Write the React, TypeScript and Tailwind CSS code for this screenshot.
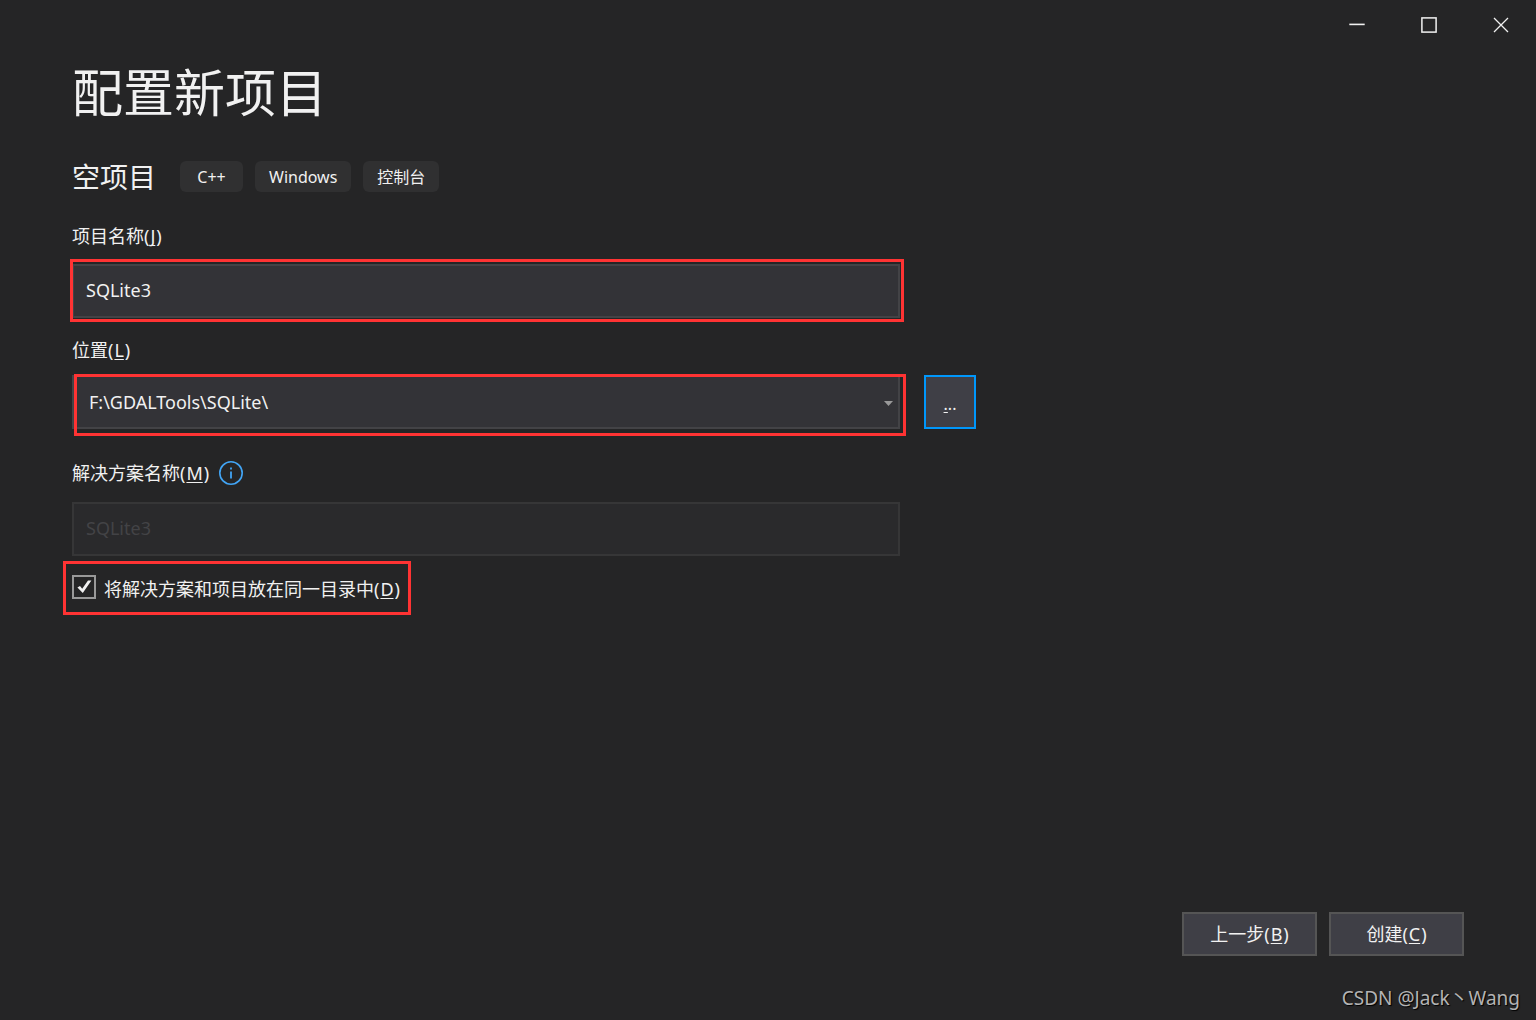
import { useState } from "react";
import type { ReactNode } from "react";

const tags = ["C++", "Windows", "控制台"];

function AccessKey({ children }: { children: ReactNode }) {
  return (
    <span>
      (
      <span className="mx-px underline decoration-1 underline-offset-2 [text-decoration-skip-ink:none]">
        {children}
      </span>
      )
    </span>
  );
}

// red frame that lies over a field
function Highlight({ className }: { className: string }) {
  return (
    <div
      aria-hidden="true"
      className={`pointer-events-none absolute border-3 border-[#ff3333] ${className}`}
    />
  );
}

function WindowControls() {
  return (
    <div className="flex h-[50px] justify-end text-[#f1f1f1]">
      <button type="button" aria-label="最小化" className="flex w-[72px] items-center justify-center">
        <svg width="18" height="16" viewBox="0 0 18 16">
          <rect x="2.3" y="6.6" width="15.4" height="1.6" fill="currentColor" />
        </svg>
      </button>
      <button type="button" aria-label="最大化" className="flex w-[72px] items-center justify-center">
        <svg width="18" height="16" viewBox="0 0 18 16" fill="none">
          <rect x="2.9" y="0.9" width="14.2" height="14.2" stroke="currentColor" strokeWidth="1.5" />
        </svg>
      </button>
      <button type="button" aria-label="关闭" className="flex w-[72px] items-center justify-center">
        <svg width="18" height="16" viewBox="0 0 18 16" fill="none">
          <path d="M3 1l14 14M17 1L3 15" stroke="currentColor" strokeWidth="1.3" />
        </svg>
      </button>
    </div>
  );
}

export default function App() {
  const [name, setName] = useState("SQLite3");
  const [sameDir, setSameDir] = useState(true);

  return (
    <div className="relative flex min-h-screen flex-col bg-[#252526] font-['Noto_Sans','Noto_Sans_CJK_SC',sans-serif] text-lg leading-6 text-[#f1f1f1]">
      <WindowControls />

      <main className="px-[72px] pt-2">
        <h1 className="text-[51px] leading-[68px]">配置新项目</h1>

        <div className="mt-[31px] flex items-center gap-6">
          <h2 className="pt-0.5 text-[28px] leading-9">空项目</h2>
          <ul className="flex gap-3">
            {tags.map((tag) => (
              <li
                key={tag}
                className="min-w-[63px] rounded-md bg-[#303031] px-3.5 pt-[5px] pb-[3px] text-center text-base leading-[23px]"
              >
                {tag}
              </li>
            ))}
          </ul>
        </div>

        <form className="mt-[29px]">
          <label htmlFor="name" className="block">
            项目名称
            <AccessKey>J</AccessKey>
          </label>
          <div className="relative mt-4 max-w-[828px]">
            <input
              id="name"
              value={name}
              onChange={(e) => setName(e.target.value)}
              className="block h-[54px] w-full border-2 border-[#434346] bg-[#333337] px-3 pb-0.5 outline-none"
            />
            <Highlight className="-top-[5px] -right-1 -bottom-1 -left-0.5" />
          </div>

          <label htmlFor="location" className="mt-5 block">
            位置
            <AccessKey>L</AccessKey>
          </label>
          <div className="mt-[13px] flex gap-6">
            <div className="relative w-full max-w-[828px]">
              <select
                id="location"
                className="block h-[54px] w-full appearance-none border-2 border-[#434346] bg-[#333337] px-[15px] outline-none"
              >
                <option>F:\GDALTools\SQLite\</option>
              </select>
              <svg
                className="pointer-events-none absolute top-[26px] right-[7px]"
                width="9"
                height="5"
                viewBox="0 0 9 5"
              >
                <path d="M0 0h9L4.5 5z" fill="#999999" />
              </svg>
              <Highlight className="-top-px -right-1.5 -bottom-[7px] left-0.5" />
            </div>
            <button
              type="button"
              aria-label="浏览"
              className="h-[54px] w-[52px] shrink-0 border-2 border-[#0097fb] bg-[#3f3f46] pt-1 text-base"
            >
              <span className="underline underline-offset-2">.</span>..
            </button>
          </div>

          <div className="mt-8 flex items-center gap-2.5">
            <label htmlFor="solution">
              解决方案名称
              <AccessKey>M</AccessKey>
            </label>
            <svg width="24" height="24" viewBox="0 0 24 24" fill="none">
              <circle cx="12" cy="12" r="11.2" stroke="#42a5f5" strokeWidth="1.6" />
              <path d="M12 10.5v7M12 6.5v2" stroke="#42a5f5" strokeWidth="1.8" />
            </svg>
          </div>
          <input
            id="solution"
            value={name}
            disabled
            readOnly
            className="mt-[17px] block h-[54px] w-full max-w-[828px] border-2 border-[#363637] bg-[#2a2a2c] px-3 pb-0.5 text-[#434346]"
          />

          <div className="relative mt-[19px] flex w-fit items-start gap-2">
            <input
              id="same-dir"
              type="checkbox"
              checked={sameDir}
              onChange={(e) => setSameDir(e.target.checked)}
              className="peer size-6 appearance-none border-2 border-[#999999] bg-[#252526]"
            />
            <svg
              className="pointer-events-none absolute top-1 left-1 hidden peer-checked:block"
              width="16"
              height="16"
              viewBox="0 0 16 16"
              fill="none"
            >
              <path d="M1.4 8.6l2.6-1.6 2.2 2.8L12 1.6h3.4L6.8 14z" fill="#f1f1f1" />
            </svg>
            <label htmlFor="same-dir" className="pt-0.5">
              将解决方案和项目放在同一目录中
              <AccessKey>D</AccessKey>
            </label>
            <Highlight className="-top-3.5 -right-[11px] -bottom-3.5 -left-[9px]" />
          </div>
        </form>
      </main>

      <footer className="mt-auto flex justify-end gap-3 px-[72px] pb-16">
        <button type="button" className="h-11 w-[135px] border-2 border-[#555555] bg-[#3f3f46]">
          上一步
          <AccessKey>B</AccessKey>
        </button>
        <button type="button" className="h-11 w-[135px] border-2 border-[#555555] bg-[#3f3f46]">
          创建
          <AccessKey>C</AccessKey>
        </button>
      </footer>

      <p className="absolute right-4 bottom-2.5 text-[19px] leading-6 text-[#b4b4b4] text-shadow-[1px_1px_1px_#000000]">
        CSDN @Jack丶Wang
      </p>
    </div>
  );
}
